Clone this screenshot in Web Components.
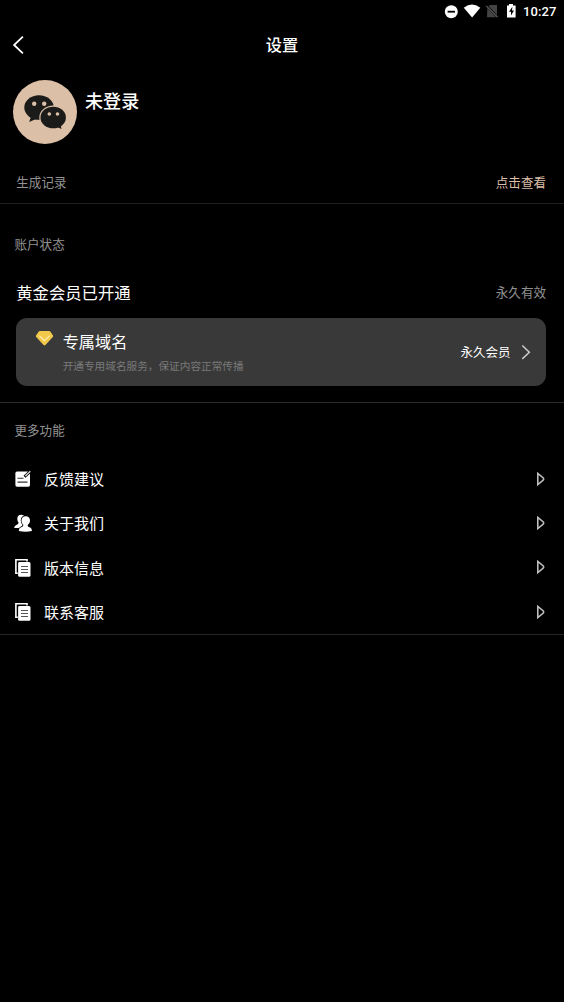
<!DOCTYPE html>
<html lang="zh-CN">
<head>
<meta charset="utf-8">
<title>设置</title>
<style>
html,body{margin:0;background:#000}
body{font-family:Roboto,"Noto Sans CJK SC",sans-serif;color:#fff;height:1002px;overflow:hidden}
</style>
</head>
<body>
<settings-page></settings-page>
<script>
const define = (name, html) => customElements.define(name, class extends HTMLElement {
  constructor() {
    super();
    const t = document.createElement('template');
    t.innerHTML = html;
    this.attachShadow({mode: 'open'}).append(t.content.cloneNode(true));
  }
});

define('status-bar', `<style>
:host{display:flex;height:24px;align-items:center;justify-content:flex-end;box-sizing:border-box;padding-right:7.500px;font:500 13px/24px Roboto,sans-serif;letter-spacing:.1px}
svg{display:block;flex:none}
span{margin-left:6.800px}
</style>
<svg width="72" height="24" viewBox="0 0 72 24">
<circle cx="7.3" cy="11.7" r="6.5" fill="#fff"/><path d="M3.6 11.7h7.4" stroke="#000" stroke-width="1.8"/>
<path d="M19.8 7.8Q28 1 36.3 7.8L28.1 17.6Z" fill="#fff"/>
<path d="M43.3 7.6L46 5H53V17.2H43Z" fill="#444"/><path d="M42 5.3L54 17.4" stroke="#000" stroke-width="2.2"/><path d="M42.3 5.8L53.6 17.2" stroke="#666" stroke-width="1.1"/>
<path d="M63 5.5h2V4h4v1.500h2.600V17.600H63Z" fill="#fff"/><path d="M68.400 6.800L65 11.800h2v3.700l3-5h-2Z" fill="#000"/>
</svg><span>10:27</span>`);

define('nav-bar', `<style>
:host{display:grid;grid-template-columns:40px 1fr 40px;height:42px;align-items:center}
svg{display:block;margin-left:11px}
h1{margin:0;padding-top:2px;text-align:center;font-size:16.3px;font-weight:500;line-height:24px}
</style>
<svg width="14" height="20" viewBox="0 0 14 20"><path d="M11.900 1.600L3.100 10l8.800 8.400" fill="none" stroke="#fff" stroke-width="1.800"/></svg>
<h1><slot></slot></h1>`);

define('user-profile', `<style>
:host{display:flex;height:96px;box-sizing:border-box;padding:14px 13px 0;gap:8px;align-items:flex-start}
svg{display:block}
h2{margin:9px 0 0;font-size:18.100px;line-height:26px;font-weight:500}
</style>
<svg width="64" height="64" viewBox="0 0 64 64"><circle cx="32" cy="32" r="32" fill="#dbbfa6"/>
<ellipse cx="26" cy="27.500" rx="14.700" ry="12.300" fill="#1b1b1a"/><path d="M18 36l-1.700 6 7.700-3.600Z" fill="#1b1b1a"/>
<ellipse cx="40.200" cy="37.500" rx="13.900" ry="12" fill="#dbbfa6"/>
<ellipse cx="40.200" cy="37.500" rx="12.700" ry="10.800" fill="#1b1b1a"/><path d="M43 46.500l5.500 2.400-1.500-6Z" fill="#1b1b1a"/>
<g fill="#dbbfa6"><circle cx="21.200" cy="23.700" r="2.200"/><circle cx="31.200" cy="23.700" r="2.200"/><circle cx="36.300" cy="34" r="1.800"/><circle cx="44.500" cy="34" r="1.800"/></g></svg>
<h2><slot></slot></h2>`);

define('info-row', `<style>
:host{display:flex;justify-content:space-between;align-items:center;height:var(--h);box-sizing:border-box;padding:var(--top,0) 18px 0 var(--left,16.300px);font-size:12.550px;line-height:20px;color:#929292;border-bottom:var(--line,none)}
.title{font-size:var(--title-size,12.550px);color:var(--title-color,#929292);padding-top:var(--title-top,0)}
.value{color:var(--value-color,#929292)}
</style>
<span class="title"><slot></slot></span><span class="value"><slot name="value"></slot></span>`);

define('member-card', `<style>
:host{display:flex;height:68px;margin:0 18px 0 16px;box-sizing:border-box;background:#393939;border-radius:11px;padding:0 15px 0 19px}
svg{display:block;flex:none}
.gem{margin-top:12px}
.text{flex:1;margin-left:8.700px;padding-top:13px}
.name{font-size:16.200px;line-height:24px}
.desc{font-size:10.650px;line-height:16px;margin-top:4px;color:#7a7a7a}
.go{display:flex;align-items:center;gap:10.500px;font-size:12.500px}
.go span{padding-bottom:2px}
</style>
<svg class="gem" width="19" height="18" viewBox="0 0 19 18"><path d="M5 1h9.200q.8 0 1.300.7l2.500 3.700q.5.8-.2 1.500L10.400 15q-.9.900-1.800 0L1.200 7q-.7-.8-.2-1.600l2.600-3.700Q4.100 1 5 1Z" fill="#f3c94b"/><path d="M4.500 5.900L9.500 10.600l5-4.700" fill="none" stroke="#fff1c2" stroke-width="1.100"/></svg>
<div class="text"><div class="name"><slot></slot></div><div class="desc"><slot name="desc"></slot></div></div>
<div class="go"><span><slot name="status"></slot></span><svg width="10" height="16" viewBox="0 0 10 16"><path d="M1.300 1.500L8.300 8.200l-7 6.700" fill="none" stroke="#ccc" stroke-width="1.500"/></svg></div>`);

define('menu-row', `<style>
:host{display:flex;height:44.330px;align-items:center;box-sizing:border-box;padding:0 19px 0 14px;font-size:15px;line-height:22px}
.label{flex:1;margin-left:12px;padding-top:1.500px}
svg{display:block;margin-bottom:1px}
::slotted(svg){display:block}
</style>
<slot name="icon"></slot><span class="label"><slot></slot></span>
<svg width="9" height="14" viewBox="0 0 9 14"><path d="M1.800 1.400V12.600L7.300 8.100Q7.900 7 7.300 5.900Z" fill="none" stroke="#bdbdbd" stroke-width="1.600"/></svg>`);

const docIcon = `<svg slot="icon" width="18" height="20" viewBox="0 0 18 20"><path d="M3.800 15.300H1.900V1.800H13V3.500" fill="none" stroke="#fff" stroke-width="1.600"/><path d="M5.500 4H15q1.500 0 1.500 1.500v11.800q0 1.500-1.500 1.500H5.500q-1.400 0-1.400-1.500V5.400Q4.100 4 5.500 4Z" fill="#fff"/><path d="M7 8.500h7M7 11.500h7M7 14.500h7" stroke="#555" stroke-width="1.100"/></svg>`;

define('settings-page', `<style>
:host{display:flex;flex-direction:column;height:1002px;background:#000}
.record{--h:42px;--line:1px solid #202020;--value-color:#dbbfa6}
.account{--h:71px;--top:10px;--left:14.500px}
.gold{--h:43px;--title-size:16.330px;--title-color:#fff;--title-top:1px;--top:8px;align-items:flex-start}
.more{--h:54px;--top:1px;--left:14.500px}
member-card{flex:none}
.divider{height:16px;border-bottom:1px solid #2b2b2b}
.menu{border-bottom:1px solid #262626}
</style>
<status-bar></status-bar>
<nav-bar>设置</nav-bar>
<user-profile>未登录</user-profile>
<info-row class="record">生成记录<span slot="value">点击查看</span></info-row>
<info-row class="account">账户状态</info-row>
<info-row class="gold">黄金会员已开通<span slot="value">永久有效</span></info-row>
<member-card>专属域名<span slot="desc">开通专用域名服务，保证内容正常传播</span><span slot="status">永久会员</span></member-card>
<div class="divider"></div>
<info-row class="more">更多功能</info-row>
<div class="menu">
<menu-row><svg slot="icon" width="18" height="20" viewBox="0 0 18 20"><path d="M3 2.600H14L16 5V16q0 1.700-1.700 1.700H3q-1.600 0-1.600-1.700V4.300Q1.400 2.600 3 2.600Z" fill="#fff"/><path d="M3.500 9.200h6M3.500 13.100h10" stroke="#333" stroke-width="1.100"/><path d="M10.500 7.700L16 2.600" stroke="#000" stroke-width="2.800"/><path d="M11.300 7L16.300 2.200" stroke="#ddd" stroke-width="1.300"/></svg>反馈建议</menu-row>
<menu-row><svg slot="icon" width="18" height="20" viewBox="0 0 18 20"><path d="M7.300 1.700q-4 0-4 4 0 2.600 1.300 4.100Q4.600 11 2.300 12 .2 12.800.2 15H8L11 4Q9.900 1.700 7.300 1.700Z" fill="#fff"/><path d="M11.800 3.200c-2.900 0-4.300 1.700-4.300 4.300 0 2 .8 3.400 1.800 4.300 0 1.500-.5 1.800-2.100 2.400C5.500 14.900 4.900 15.900 4.900 17.900Q11.500 19.500 17.900 17.900c0-2-.8-3-2.400-3.600-1.400-.5-1.800-.9-1.800-2.400 1.500-1 2.300-2.500 2.300-4.400 0-2.700-1.400-4.300-4.200-4.300Z" fill="#fff" stroke="#000" stroke-width="1.500" paint-order="stroke"/></svg>关于我们</menu-row>
<menu-row>${docIcon}版本信息</menu-row>
<menu-row>${docIcon}联系客服</menu-row>
</div>`);
</script>
</body>
</html>
